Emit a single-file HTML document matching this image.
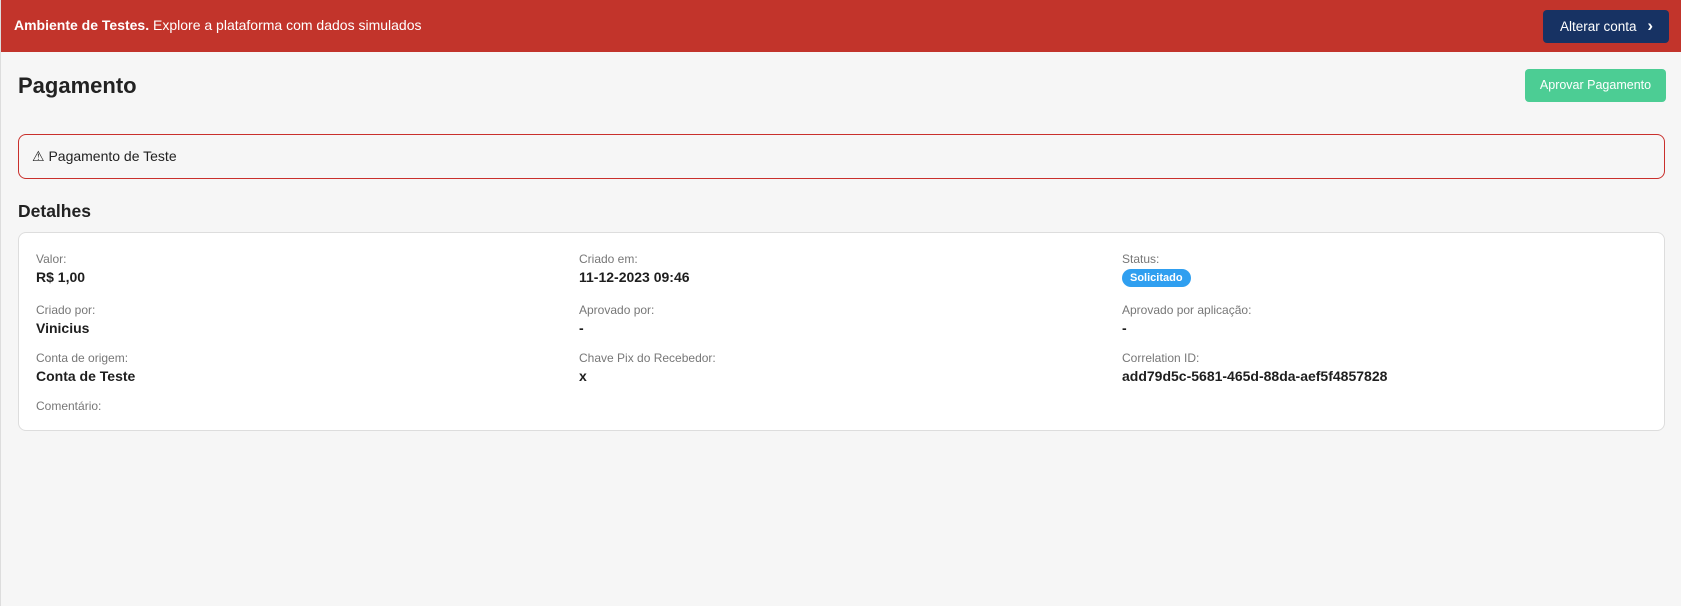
<!DOCTYPE html>
<html><head><meta charset="utf-8"><style>
*{box-sizing:border-box;margin:0;padding:0}
body{width:1681px;height:606px;background:#f6f6f6;font-family:"Liberation Sans",sans-serif;color:#222;position:relative;overflow:hidden;border-left:1px solid #ddd}
.banner{position:absolute;left:0;top:0;width:1681px;height:52px;background:#c2342b;color:#fff;font-size:14px}
.banner .t{position:absolute;left:13px;top:17px}
.btn1{position:absolute;left:1542px;top:10px;width:126px;height:33px;background:#173263;border-radius:4px;color:#fff;font-size:13.5px;line-height:33px;padding-left:17px}
.btn1 span{position:absolute;right:16px;top:-1px;font-weight:bold;font-size:17px}
h1{position:absolute;left:17px;top:73px;font-size:22px;font-weight:600}
.btn2{position:absolute;left:1524px;top:69px;width:141px;height:33px;background:#4ccd94;border-radius:4px;color:#fff;font-size:12.5px;line-height:33px;text-align:center}
.alert{position:absolute;left:17px;top:134px;width:1647px;height:45px;border:1px solid #c9302c;border-radius:8px;font-size:14px;padding:13px 0 0 13px}
h2{position:absolute;left:17px;top:201px;font-size:17.5px;font-weight:600}
.card{position:absolute;left:17px;top:232px;width:1647px;height:199px;background:#fff;border:1px solid #ddd;border-radius:8px}
.f{position:absolute;font-size:12px;color:#777}
.f b{display:block;color:#1e1e1e;font-size:14px;margin-top:3px}
.badge{display:inline-block;margin-top:3px;background:#2f9ff0;color:#fff;font-size:11px;font-weight:bold;border-radius:10px;padding:3px 8px}
</style></head><body>
<div class="banner"><div class="t"><b>Ambiente de Testes.</b> Explore a plataforma com dados simulados</div>
<div class="btn1">Alterar conta<span>&#8250;</span></div></div>
<h1>Pagamento</h1>
<div class="btn2">Aprovar Pagamento</div>
<div class="alert">⚠ Pagamento de Teste</div>
<h2>Detalhes</h2>
<div class="card">
<div class="f" style="left:17px;top:19px">Valor:<b>R$ 1,00</b></div>
<div class="f" style="left:560px;top:19px">Criado em:<b>11-12-2023 09:46</b></div>
<div class="f" style="left:1103px;top:19px">Status:<br><span class="badge">Solicitado</span></div>
<div class="f" style="left:17px;top:70px">Criado por:<b>Vinicius</b></div>
<div class="f" style="left:560px;top:70px">Aprovado por:<b>-</b></div>
<div class="f" style="left:1103px;top:70px">Aprovado por aplicação:<b>-</b></div>
<div class="f" style="left:17px;top:118px">Conta de origem:<b>Conta de Teste</b></div>
<div class="f" style="left:560px;top:118px">Chave Pix do Recebedor:<b>x</b></div>
<div class="f" style="left:1103px;top:118px">Correlation ID:<b>add79d5c-5681-465d-88da-aef5f4857828</b></div>
<div class="f" style="left:17px;top:166px">Comentário:</div>
</div>
</body></html>
